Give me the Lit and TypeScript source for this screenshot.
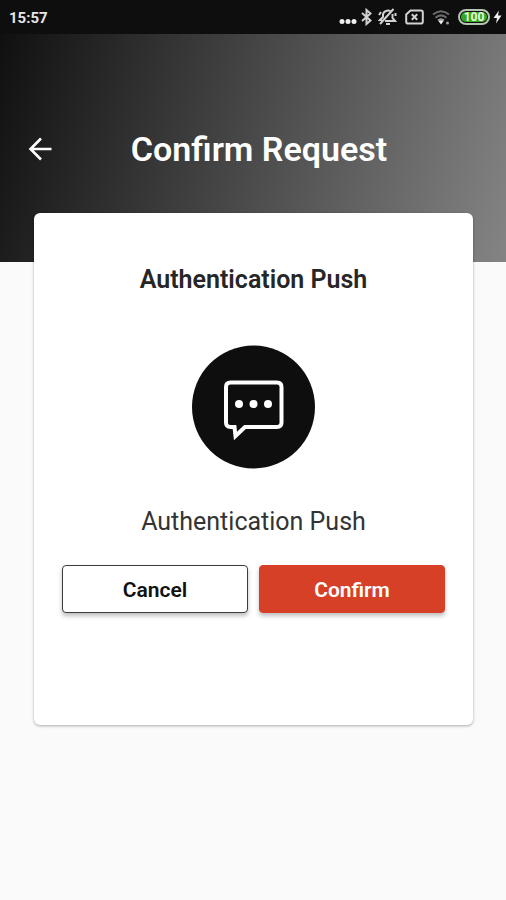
import { LitElement, html, css } from "lit";
import { customElement, property } from "lit/decorators.js";

@customElement("status-bar")
class StatusBar extends LitElement {
  @property() time = "";
  @property({ type: Number }) battery = 0;

  static styles = css`
    :host {
      display: flex;
      align-items: center;
      justify-content: space-between;
      height: 34px;
      padding: 0 4px 0 9px;
      background: #0e0e0e;
      color: #e6e6e6;
    }
    .time {
      padding-top: 2px;
      font-size: 15px;
      line-height: 20px;
      font-weight: 700;
    }
    .icons {
      display: flex;
      align-items: center;
    }
    svg {
      display: block;
      fill: none;
      stroke: #d2d2d2;
      stroke-width: 2;
    }
    .solid {
      fill: #f0f0f0;
      stroke: none;
    }
    .dim {
      stroke: #6c6c6c;
      stroke-width: 2;
    }
    .bell,
    .sim,
    .wifi {
      margin-right: 8px;
    }
    .bluetooth {
      margin: 0 6px 0 4px;
    }
    .battery {
      box-sizing: border-box;
      width: 32px;
      height: 16px;
      padding: 1px;
      border: 2px solid #b4c4b0;
      border-radius: 8px;
      margin-right: 3px;
    }
    .level {
      display: block;
      height: 10px;
      border-radius: 5px;
      background: #35a822;
      color: #e4fbdc;
      font-size: 12px;
      line-height: 10px;
      font-weight: 700;
      text-align: center;
    }
  `;

  render() {
    return html`
      <span class="time">${this.time}</span>
      <div class="icons">
        <svg width="18" height="20" viewBox="0 0 18 20" aria-hidden="true">
          <g class="solid">
            <circle cx="3" cy="14.5" r="2.5" />
            <circle cx="9" cy="14.5" r="2.5" />
            <circle cx="15" cy="14.5" r="2.5" />
          </g>
        </svg>
        <svg class="bluetooth" width="11" height="18" viewBox="0 0 11 18" aria-hidden="true">
          <path d="M1 5 L9.5 12.5 L5.5 16 V2 L9.5 5.5 L1 13" />
        </svg>
        <svg class="bell" width="19" height="18" viewBox="0 0 19 18" aria-hidden="true">
          <path d="M15.5 1 L2 16" />
          <path d="M12.5 3.2 C10 1.8 5.5 2.8 5 6.5 V9 L2 12 H4" />
          <path d="M14.5 6 V10 L17 13 H7" />
          <path d="M8 16 H12 M1 7 L3 4" />
          <path d="M17.5 5 V8" />
        </svg>
        <svg class="sim" width="19" height="16" viewBox="0 0 19 16" aria-hidden="true">
          <path d="M5.5 1.5 H16 Q17.8 1.5 17.8 3.3 V12.7 Q17.8 14.5 16 14.5 H3 Q1.2 14.5 1.2 12.7 V5.5 Z" />
          <path d="M6.8 5.3 L12.2 10.7 M12.2 5.3 L6.8 10.7" />
        </svg>
        <svg class="wifi" width="18" height="17" viewBox="0 0 18 17" aria-hidden="true">
          <path class="dim" d="M1 5.5 Q9 -1 17 5.5 M3.5 8.8 Q9 4 14.500 8.8" />
          <path d="M6 11.5 Q9 9 12 11.5" stroke="#a0a0a0" />
          <path class="solid" d="M6.5 12 Q9 10.500 11.5 12 L9 15.5 Z" />
          <circle cx="15.5" cy="14" r="1.5" fill="#a0a0a0" stroke="none" />
        </svg>
        <div class="battery"><span class="level">${this.battery}</span></div>
        <svg width="9" height="14" viewBox="0 0 9 14" aria-hidden="true">
          <path class="solid" d="M6 0.5 L0.5 8 H4 L3 13.5 L8.5 5.5 H5 Z" />
        </svg>
      </div>
    `;
  }
}

@customElement("app-root")
class AppRoot extends LitElement {
  static styles = css`
    :host {
      display: block;
      min-height: 100vh;
      background: #fafafa;
      font-family: Roboto, "Liberation Sans", sans-serif;
      color: #262626;
    }
    h1,
    h2,
    p {
      margin: 0;
    }
    .hero {
      padding: 95px 12px 93px 24px;
      background: linear-gradient(105deg, #101010 0%, #848484 100%);
    }
    .toolbar {
      display: grid;
      grid-template-columns: 32px 1fr 32px;
      align-items: center;
    }
    .back {
      display: grid;
      place-items: center;
      width: 32px;
      height: 40px;
      padding: 0;
      border: 0;
      background: none;
    }
    .back svg {
      fill: none;
      stroke: #fff;
      stroke-width: 2.6;
    }
    h1 {
      font-size: 34px;
      line-height: 40px;
      font-weight: 600;
      text-align: center;
      color: #fff;
    }
    .card {
      margin: -49px 33px 0 34px;
      padding: 51px 28px 112px;
      border-radius: 6px;
      background: #fff;
      box-shadow: 0 1px 3px rgba(0, 0, 0, 0.32);
      position: relative;
      text-align: center;
    }
    h2 {
      font-size: 25px;
      line-height: 32px;
      font-weight: 600;
    }
    .badge {
      display: block;
      margin: 49px auto 37px;
    }
    .message {
      font-size: 25px;
      line-height: 32px;
      color: #333;
    }
    .actions {
      display: grid;
      grid-template-columns: 1fr 1fr;
      gap: 11px;
      margin-top: 27px;
    }
    .action {
      height: 48px;
      padding: 2px 0 0;
      border: 1px solid #3c3c3c;
      border-radius: 4px;
      background: #fff;
      color: #111;
      font: 600 21px/24px Roboto, "Liberation Sans", sans-serif;
      box-shadow: 0 3px 4px rgba(0, 0, 0, 0.25);
    }
    .primary {
      border-color: #d64027;
      background: #d64027;
      color: #fff;
    }
  `;

  render() {
    return html`
      <status-bar time="15:57" battery="100"></status-bar>
      <header class="hero">
        <div class="toolbar">
          <button class="back" type="button" aria-label="Back">
            <svg width="24" height="24" viewBox="0 0 24 24" aria-hidden="true">
              <path d="M23.5 12 H2.5 M13 1.5 L2.5 12 L13 22.5" />
            </svg>
          </button>
          <h1>Confirm Request</h1>
        </div>
      </header>
      <main class="card">
        <h2>Authentication Push</h2>
        <svg class="badge" width="124" height="124" viewBox="0 0 124 124" aria-hidden="true">
          <circle cx="61.5" cy="62" r="61.5" fill="#0e0e0e" />
          <path
            d="M38.5 37.5 H85 Q89.5 37.5 89.5 42 V77.5 Q89.5 82 85 82 H53 L43.5 91 L42.500 82 H38.5 Q34 82 34 77.5 V42 Q34 37.5 38.5 37.5 Z"
            fill="none"
            stroke="#fff"
            stroke-width="4"
          />
          <g fill="#fff">
            <circle cx="47" cy="59" r="4" />
            <circle cx="61.5" cy="59" r="4" />
            <circle cx="76" cy="59" r="4" />
          </g>
        </svg>
        <p class="message">Authentication Push</p>
        <div class="actions">
          <button class="action" type="button">Cancel</button>
          <button class="action primary" type="button">Confirm</button>
        </div>
      </main>
    `;
  }
}
